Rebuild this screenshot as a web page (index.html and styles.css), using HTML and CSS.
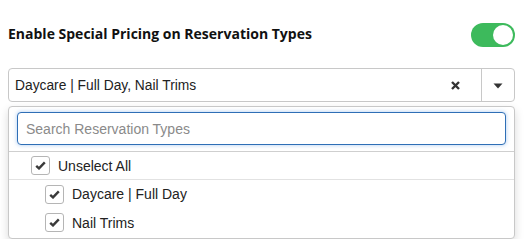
FILE: index.html
```html
<!DOCTYPE html>
<html>
<head>
<meta charset="utf-8">
<link rel="stylesheet" href="styles.css">
</head>
<body>
<div class="page">
  <div class="header">
    <div class="title">Enable Special Pricing on Reservation Types</div>
    <div class="toggle"><span class="knob"></span></div>
  </div>
  <div class="select">
    <div class="value">Daycare | Full Day, Nail Trims</div>
    <div class="clear">
      <svg width="9" height="9" viewBox="0 0 9 9"><path d="M1 1 L8 8 M8 1 L1 8" stroke="#333" stroke-width="2.4" stroke-linecap="butt"/></svg>
    </div>
    <div class="arrow">
      <svg width="10" height="6" viewBox="0 0 10 6"><path d="M0.5 0.5 H9.5 L5 5.5 Z" fill="#333"/></svg>
    </div>
  </div>
  <div class="dropdown">
    <div class="search-wrap">
      <input class="search" type="text" placeholder="Search Reservation Types">
    </div>
    <div class="row all">
      <span class="cb"><svg width="11" height="9" viewBox="0 0 11 9"><path d="M1.2 4.8 L4 7.4 L9.8 1.4" fill="none" stroke="#3a3a3a" stroke-width="2.4"/></svg></span>
      <span class="label">Unselect All</span>
    </div>
    <div class="items">
      <div class="row item">
        <span class="cb"><svg width="11" height="9" viewBox="0 0 11 9"><path d="M1.2 4.8 L4 7.4 L9.8 1.4" fill="none" stroke="#3a3a3a" stroke-width="2.4"/></svg></span>
        <span class="label">Daycare | Full Day</span>
      </div>
      <div class="row item">
        <span class="cb"><svg width="11" height="9" viewBox="0 0 11 9"><path d="M1.2 4.8 L4 7.4 L9.8 1.4" fill="none" stroke="#3a3a3a" stroke-width="2.4"/></svg></span>
        <span class="label">Nail Trims</span>
      </div>
    </div>
  </div>
</div>
</body>
</html>
```

FILE: styles.css
```css
* { box-sizing: border-box; }
html, body { margin: 0; padding: 0; background: #fff; }
body { font-family: "Liberation Sans", Arial, sans-serif; color: #333; }
.page { padding: 23px 14px 0 8px; width: 528px; }
.header {
  display: flex;
  align-items: center;
  justify-content: space-between;
  height: 24px;
}
.title {
  font-family: "Open Sans", sans-serif;
  font-weight: 700;
  font-size: 14px;
  color: #111;
  margin-top: -3px;
}
.toggle {
  width: 44px;
  height: 24px;
  border-radius: 12px;
  background: #3dba5c;
  position: relative;
  margin-right: -1px;
}
.knob {
  position: absolute;
  right: 2px;
  top: 2px;
  width: 20px;
  height: 20px;
  border-radius: 50%;
  background: #fff;
}
.select {
  margin-top: 21px;
  height: 34px;
  border: 1px solid #c8c8c8;
  border-radius: 4px;
  display: flex;
  align-items: stretch;
  margin-right: -1px;
}
.value {
  flex: 1;
  display: flex;
  align-items: center;
  padding-left: 6px;
  font-size: 13.8px;
  color: #222;
}
.clear {
  width: 36px;
  display: flex;
  align-items: center;
  justify-content: center;
  padding-right: 16px;
}
.arrow {
  width: 33px;
  border-left: 1px solid #c8c8c8;
  display: flex;
  align-items: center;
  justify-content: center;
  padding-top: 1px;
}
.dropdown {
  margin-top: 4px;
  border: 1px solid #c8c8c8;
  border-radius: 4px;
  box-shadow: 0 4px 10px rgba(0,0,0,0.15);
  margin-right: -1px;
  background: #fff;
}
.search-wrap {
  padding: 5px 8px 6px 8px;
  border-bottom: 1px solid #cfcfcf;
}
.search {
  display: block;
  width: 100%;
  height: 33px;
  border: 1px solid #2f6fb6;
  border-radius: 4px;
  box-shadow: 0 0 4px rgba(102,160,230,0.55);
  padding: 0 8px;
  font-family: "Liberation Sans", Arial, sans-serif;
  font-size: 14px;
  outline: none;
}
.search::placeholder { color: #8a8a8a; }
.row {
  display: flex;
  align-items: center;
  height: 28px;
  font-size: 14px;
  color: #222;
}
.all {
  padding-left: 22px;
  border-bottom: 1px solid #e2e2e2;
}
.items { padding-bottom: 1px; }
.item { padding-left: 36px; height: 28px; }
.item + .item { height: 29px; }
.cb {
  width: 19px;
  height: 19px;
  border: 1px solid #b5b5b5;
  border-radius: 3px;
  display: flex;
  align-items: center;
  justify-content: center;
  margin-right: 8px;
  background: #fff;
}
.label { line-height: 1; }
```
